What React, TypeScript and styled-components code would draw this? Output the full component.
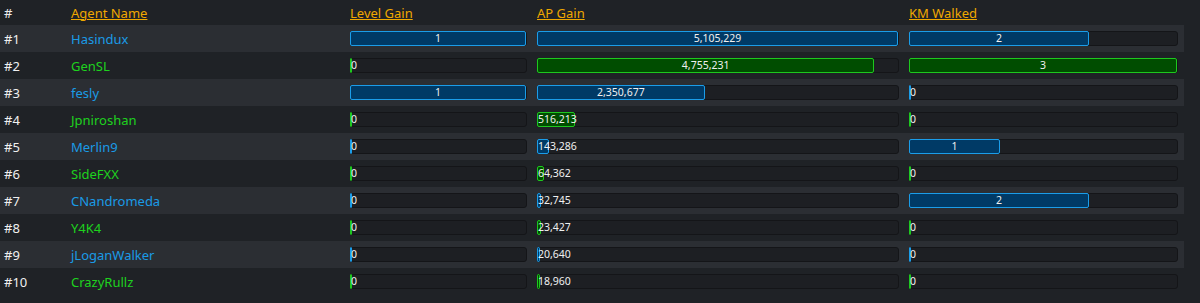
import { createGlobalStyle, styled } from "styled-components";

const GlobalStyle = createGlobalStyle`
  body {
    margin: 0;
    background: #1f2226;
    font-family: "Noto Sans", "Open Sans", sans-serif;
  }
`;

type Agent = {
  name: string;
  team: "blue" | "green";
  level: number;
  ap: number;
  km: number;
};

const agents: Agent[] = [
  { name: "Hasindux", team: "blue", level: 1, ap: 5105229, km: 2 },
  { name: "GenSL", team: "green", level: 0, ap: 4755231, km: 3 },
  { name: "fesly", team: "blue", level: 1, ap: 2350677, km: 0 },
  { name: "Jpniroshan", team: "green", level: 0, ap: 516213, km: 0 },
  { name: "Merlin9", team: "blue", level: 0, ap: 143286, km: 1 },
  { name: "SideFXX", team: "green", level: 0, ap: 64362, km: 0 },
  { name: "CNandromeda", team: "blue", level: 0, ap: 32745, km: 2 },
  { name: "Y4K4", team: "green", level: 0, ap: 23427, km: 0 },
  { name: "jLoganWalker", team: "blue", level: 0, ap: 20640, km: 0 },
  { name: "CrazyRullz", team: "green", level: 0, ap: 18960, km: 0 },
];

const maxLevel = 1;
const maxAp = 5105229;
const maxKm = 3;

const teamColors = {
  blue: { text: "#1a9be6", fill: "#003a66", border: "#1b9de9" },
  green: { text: "#1ed21e", fill: "#004d00", border: "#1ec81e" },
};

const Board = styled.div`
  width: 1184px;
  display: grid;
  grid-template-columns: 67px 279px 187px 372px 279px;
`;

const Row = styled.div<{ $odd?: boolean }>`
  display: contents;
  & > div {
    background: ${(p) => (p.$odd ? "#2b2e33" : "transparent")};
  }
`;

const HeadCell = styled.div`
  height: 25px;
  display: flex;
  align-items: center;
  padding-left: 4px;
  font-size: 13px;
  color: #f0a800;
  text-decoration: underline;
`;

const HashCell = styled(HeadCell)`
  color: #ececec;
  text-decoration: none;
`;

const Cell = styled.div`
  height: 27px;
  display: flex;
  align-items: center;
  padding: 0 6px 0 4px;
  font-size: 13px;
  color: #f0f0f0;
`;

const NameCell = styled(Cell)<{ $team: "blue" | "green" }>`
  color: ${(p) => teamColors[p.$team].text};
`;

const Track = styled.div`
  width: 100%;
  height: 15px;
  box-sizing: border-box;
  background: #1d1f23;
  border: 1px solid #141518;
  border-radius: 3px;
  display: flex;
`;

const Fill = styled.div<{ $team: "blue" | "green" }>`
  height: 15px;
  margin: -1px 0 0 -1px;
  box-sizing: border-box;
  background: ${(p) => teamColors[p.$team].fill};
  border: 1px solid ${(p) => teamColors[p.$team].border};
  border-radius: 2px;
  color: #f0f0f0;
  font-size: 10.5px;
  line-height: 13px;
  text-align: center;
  white-space: nowrap;
`;

const Bar = ({ value, max, team }: { value: number; max: number; team: "blue" | "green" }) => (
  <Track>
    <Fill $team={team} style={{ width: `calc(${(value / max) * 100}% + 2px)`, minWidth: 2 }}>
      {value.toLocaleString("en-US")}
    </Fill>
  </Track>
);

const App = () => (
  <>
    <GlobalStyle />
    <Board>
      <HashCell>#</HashCell>
      <HeadCell>Agent Name</HeadCell>
      <HeadCell>Level Gain</HeadCell>
      <HeadCell>AP Gain</HeadCell>
      <HeadCell>KM Walked</HeadCell>
      {agents.map((a, i) => (
        <Row key={a.name} $odd={i % 2 === 0}>
          <Cell>#{i + 1}</Cell>
          <NameCell $team={a.team}>{a.name}</NameCell>
          <Cell>
            <Bar value={a.level} max={maxLevel} team={a.team} />
          </Cell>
          <Cell>
            <Bar value={a.ap} max={maxAp} team={a.team} />
          </Cell>
          <Cell>
            <Bar value={a.km} max={maxKm} team={a.team} />
          </Cell>
        </Row>
      ))}
    </Board>
  </>
);

export default App;
